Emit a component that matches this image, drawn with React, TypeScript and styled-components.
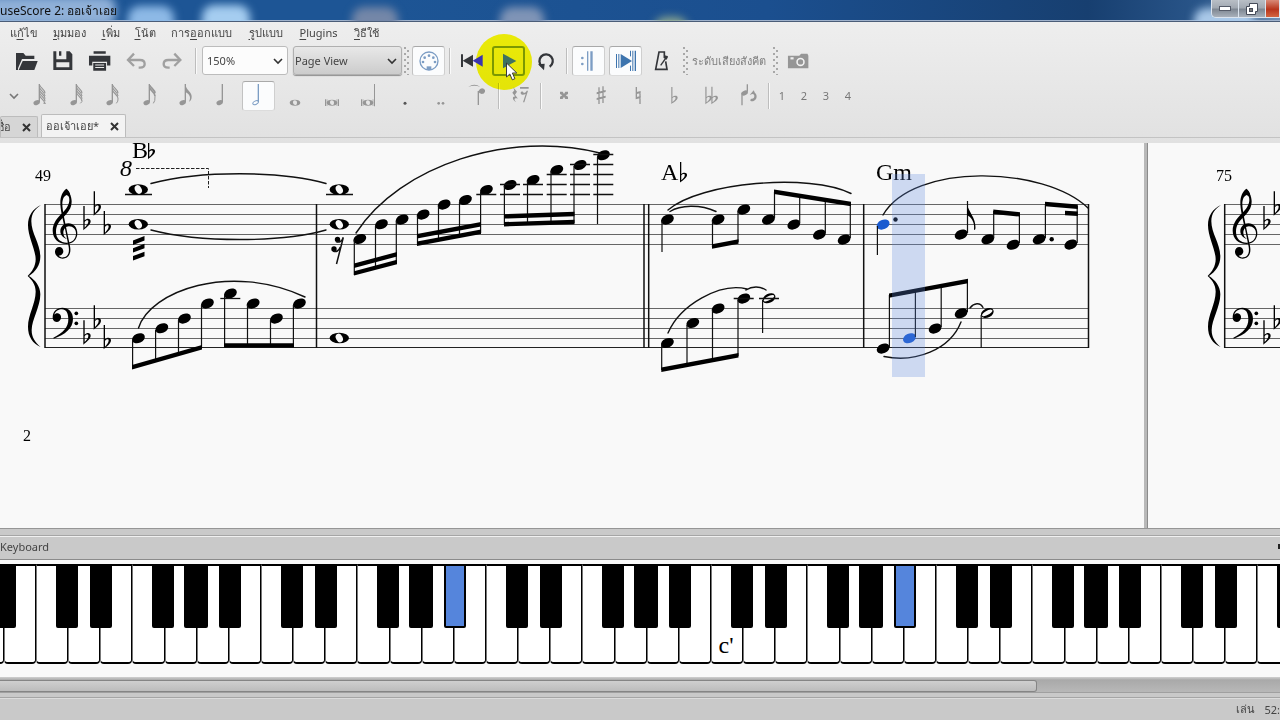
import React from "react";
import styled, { createGlobalStyle, css } from "styled-components";

const GlobalStyle = createGlobalStyle`
  * { box-sizing: border-box; }
  body { margin: 0; overflow: hidden; font-family: "Noto Sans", "Open Sans", sans-serif; font-size: 11px; color: #444; }
  button, select { font: inherit; color: inherit; }
`;

/* ---------- window frame ---------- */

const Window = styled.div`
  display: flex;
  flex-direction: column;
  height: 100vh;
  background: #c9c9c9;
`;

const TitleBar = styled.header`
  position: relative;
  flex: none;
  display: flex;
  justify-content: space-between;
  height: 22px;
  overflow: hidden;
  border-bottom: 1px solid #4b5d78;
  box-shadow: inset 0 -1px 0 #9fb2cc;
  background: linear-gradient(90deg, #1d5595 0%, #1d5595 30%, #1b4f8f 60%, #173f70 85%, #2a568a 94%, #6f8fb3 100%);
`;

const Glow = styled.span<{ $left: string; $width: number; $top: number; $color: string }>`
  position: absolute;
  left: ${(p) => p.$left};
  top: ${(p) => p.$top}px;
  width: ${(p) => p.$width}px;
  height: 30px;
  border-radius: 12px;
  filter: blur(4px);
  background: ${(p) => p.$color};
`;

const WindowTitle = styled.h1`
  position: relative;
  margin: 0;
  font-size: 12px;
  font-weight: 400;
  line-height: 22px;
  color: #111;
  white-space: nowrap;
`;

const WindowControls = styled.div`
  position: relative;
  display: flex;
  height: 18px;
  border: 1px solid #dbe4ee;
  border-top: 0;
  border-right: 0;
  border-radius: 0 0 0 5px;
  overflow: hidden;
`;

const WindowButton = styled.button<{ $danger?: boolean }>`
  display: flex;
  align-items: center;
  justify-content: center;
  width: ${(p) => (p.$danger ? 14 : 27)}px;
  padding: 0;
  border: 0;
  border-right: 1px solid #dbe4ee;
  background: ${(p) =>
    p.$danger
      ? "linear-gradient(#d88a78, #b8351c 55%, #d4643f)"
      : "linear-gradient(#b9bfc6, #a2a9b2 45%, #7f8893 55%, #a8b0ba)"};
`;

/* ---------- menus and tool bars ---------- */

const Chrome = styled.div`
  flex: none;
  display: flex;
  flex-direction: column;
  height: 121px;
  background: linear-gradient(#eeeeee, #e1e1e1);
`;

const MenuBar = styled.nav`
  display: flex;
  align-items: center;
  gap: 16px;
  height: 22px;
  padding-left: 10px;
`;

const MenuItem = styled.button<{ $width: number }>`
  display: flex;
  justify-content: center;
  width: ${(p) => p.$width}px;
  padding: 0;
  border: 0;
  background: none;
  line-height: 20px;
  white-space: nowrap;
  u {
    text-underline-offset: 2px;
  }
`;

const ToolBar = styled.div<{ $height: number; $start: number }>`
  display: flex;
  align-items: center;
  height: ${(p) => p.$height}px;
  padding-left: ${(p) => p.$start}px;
`;

const ToolButton = styled.button<{ $width?: number; $pressed?: boolean; $raised?: boolean }>`
  position: relative;
  z-index: ${(p) => (p.$raised ? 1 : "auto")};
  flex: none;
  display: flex;
  align-items: center;
  justify-content: center;
  width: ${(p) => p.$width ?? 33}px;
  height: 30px;
  padding: 0;
  border: 1px solid transparent;
  border-radius: 3px;
  background: none;
  ${(p) =>
    p.$pressed &&
    css`
      border-color: #a9a9a9 #cfcfcf #dcdcdc #c2c2c2;
      background: #fbfcfd;
    `}
`;

const PlayButton = styled(ToolButton)`
  border: 2px solid #7c9a3c;
  svg {
    position: relative;
    z-index: 1;
  }
`;

const ClickHalo = styled.span`
  position: absolute;
  left: -18px;
  top: -14px;
  width: 56px;
  height: 56px;
  border-radius: 50%;
  background: #fcfc08;
  mix-blend-mode: multiply;
  pointer-events: none;
`;

const Pointer = styled.span`
  position: absolute;
  z-index: 2;
  left: 11px;
  top: 14px;
  display: flex;
`;

const Gap = styled.span<{ $width: number }>`
  flex: none;
  width: ${(p) => p.$width}px;
`;

const Separator = styled.span<{ $gap?: number }>`
  flex: none;
  width: 2px;
  height: 26px;
  margin: 0 ${(p) => p.$gap ?? 5}px;
  border-left: 1px solid #bdbdbd;
  border-right: 1px solid #fafafa;
`;

const Handle = styled.span<{ $gap: number }>`
  flex: none;
  width: 6px;
  height: 28px;
  margin: 0 ${(p) => p.$gap}px;
  background-image: radial-gradient(circle at 1px 1px, #a8a8a8 1px, transparent 1px),
    radial-gradient(circle at 4px 4px, #a8a8a8 1px, transparent 1px);
  background-size: 6px 6px;
`;

const Combo = styled.label<{ $width: number; $flat?: boolean }>`
  position: relative;
  display: flex;
  align-items: center;
  width: ${(p) => p.$width}px;
  height: 29px;
  border: 1px solid ${(p) => (p.$flat ? "#bcbcbc" : "#b0b0b0")};
  border-radius: 3px;
  background: ${(p) => (p.$flat ? "#fcfcfc" : "linear-gradient(#e8e8e8, #cccccc)")};
  box-shadow: ${(p) => (p.$flat ? "none" : "0 1px 1px #8f8f8f")};
  svg {
    position: absolute;
    right: 4px;
    pointer-events: none;
  }
`;

const Select = styled.select<{ $inset: number }>`
  width: 100%;
  height: 100%;
  padding: 0 0 0 ${(p) => p.$inset}px;
  border: 0;
  appearance: none;
  background: none;
`;

const PitchLabel = styled.button`
  width: 74px;
  padding: 0;
  border: 0;
  background: none;
  color: #808080;
  white-space: nowrap;
`;

const Durations = styled.div`
  display: grid;
  grid-template-columns: repeat(13, 1fr);
  justify-items: center;
  width: 475px;
`;

const VoiceButton = styled.button`
  width: 22px;
  padding: 0;
  border: 0;
  background: none;
  color: #777;
`;

const Tabs = styled.div`
  display: flex;
  align-items: flex-end;
  gap: 3px;
  height: 23px;
  margin-top: 1px;
  border-bottom: 1px solid #c3c3c3;
`;

const Tab = styled.div<{ $active?: boolean; $width: number }>`
  display: flex;
  align-items: center;
  justify-content: flex-end;
  gap: 11px;
  width: ${(p) => p.$width}px;
  height: ${(p) => (p.$active ? 23 : 21)}px;
  padding-right: 6px;
  border: 1px solid #bcbcbc;
  border-bottom: 0;
  border-radius: 2px 2px 0 0;
  background: ${(p) => (p.$active ? "#f3f3f3" : "#d6d6d6")};
  overflow: hidden;
  white-space: nowrap;
`;

const TabLabel = styled.button`
  padding: 0;
  border: 0;
  background: none;
`;

const CloseButton = styled.button`
  display: flex;
  padding: 0;
  border: 0;
  background: none;
`;

/* ---------- score canvas ---------- */

const Canvas = styled.main`
  flex: 1;
  display: flex;
  min-height: 0;
  overflow: hidden;
  background: #f9f9f9;
  border-bottom: 1px solid #969696;
`;

const Sheet = styled.svg<{ $first?: boolean }>`
  flex: ${(p) => (p.$first ? "0 0 1144px" : "1 1 0")};
  min-width: 0;
  height: 385px;
  font-family: "Liberation Serif", serif;
`;

const PageEdge = styled.div`
  flex: none;
  width: 4px;
  border-right: 1px solid #8c8c8c;
  background: #b9b9b9;
`;

/* ---------- piano dock ---------- */

const DockTitle = styled.div`
  flex: none;
  display: flex;
  align-items: center;
  justify-content: space-between;
  height: 25px;
  margin-top: 6px;
  padding-bottom: 3px;
  border-top: 1px solid #a5a5a5;
  border-bottom: 1px solid #8b8b8b;
  box-shadow: inset 0 1px 0 #f0f0f0;
`;

const FloatMark = styled.button`
  width: 2px;
  height: 5px;
  padding: 0;
  border: 0;
  background: #222;
`;

const Piano = styled.div`
  flex: none;
  display: flex;
  height: 117px;
  padding: 4px 0 13px;
  overflow: hidden;
  background: #f9f9f9;
`;

const Octave = styled.div`
  position: relative;
  flex: none;
  display: grid;
  grid-template-columns: repeat(7, 1fr);
  width: 225px;
  &:first-child {
    margin-left: -189px;
  }
`;

const WhiteKey = styled.button`
  display: flex;
  align-items: flex-end;
  justify-content: center;
  padding: 0 2px 3px 0;
  border: 1px solid #000;
  border-top-width: 2px;
  border-bottom-width: 2px;
  border-left-color: #777;
  border-radius: 0 0 4px 4px;
  background: #fff;
  color: #000;
  font-family: "Liberation Serif", serif;
  font-size: 24px;
  line-height: 28px;
`;

const BlackKey = styled.button<{ $at: number; $wide?: boolean; $sounding?: boolean }>`
  position: absolute;
  top: 0;
  left: ${(p) => p.$at}px;
  width: ${(p) => (p.$wide ? 24 : 22)}px;
  height: 64px;
  padding: 0;
  border: 2px solid #000;
  border-radius: 0 0 2px 2px;
  background: ${(p) => (p.$sounding ? "#5585dc" : "#000")};
`;

const ScrollTrack = styled.div`
  flex: none;
  height: 16px;
  margin-bottom: 4px;
  padding-top: 3px;
  border-bottom: 1px solid #a0a0a0;
  background: linear-gradient(#d0d0d0, #a9a9a9 3px, #b8b8b8);
`;

const ScrollThumb = styled.div`
  width: 81%;
  height: 12px;
  border: 1px solid #858585;
  border-left: 0;
  border-radius: 0 3px 3px 0;
  background: linear-gradient(#cfcfcf, #bcbcbc);
`;

const StatusBar = styled.footer`
  flex: none;
  display: flex;
  align-items: center;
  justify-content: flex-end;
  gap: 9px;
  height: 23px;
  border-top: 1px solid #a5a5a5;
  box-shadow: inset 0 1px 0 #dcdcdc;
`;

/* ---------- tool bar icons ---------- */

interface IconProps {
  box: string;
  color?: string;
  children: React.ReactNode;
}

/* Icon artwork is drawn on a grid three times finer than the screen. */
const Icon = ({ box, color = "#34363a", children }: IconProps) => {
  const [, , w, h] = box.split(" ").map(Number);
  return (
    <svg width={Math.round(w / 3)} height={Math.round(h / 3)} viewBox={box} fill={color} stroke="none" aria-hidden="true">
      {children}
    </svg>
  );
};

const GREY = "#969696";
const BLUE = "#7c9dc4";

const Chevron = ({ color = "#333" }: { color?: string }) => (
  <svg width="10" height="8" viewBox="0 0 10 8" fill="none" stroke={color} strokeWidth="1.6" aria-hidden="true">
    <path d="M1 2l4 4 4-4" />
  </svg>
);

const Cross = () => (
  <svg width="9" height="9" viewBox="0 0 9 9" stroke="#333" strokeWidth="2" aria-hidden="true">
    <path d="M1 1l7 7M8 1l-7 7" />
  </svg>
);

const FlaggedNote = ({ flags, color = GREY, hollow }: { flags: number; color?: string; hollow?: boolean }) => (
  <Icon box="0 0 48 72" color={color}>
    <ellipse
      cx="17"
      cy="56"
      rx={hollow ? 9 : 10}
      ry={hollow ? 5 : 7}
      transform="rotate(-25 17 56)"
      fill={hollow ? "none" : color}
      stroke={hollow ? color : "none"}
      strokeWidth="3"
    />
    <path d="M23 0h4v54h-4z" />
    {flags === 1 && <path d="M25 2C28 18 45 24 44 38C44 46 41 50 36 53C42 42 40 32 25 24z" />}
    {flags > 1 &&
      Array.from({ length: flags }, (_, i) => (
        <path
          key={i}
          d={`M26 ${3 + i * 8}C27 ${11 + i * 8} 42 ${16 + i * 8} 42 ${28 + i * 8}`}
          fill="none"
          stroke={color}
          strokeWidth={flags === 2 ? 5 : 3.5}
        />
      ))}
    {flags > 1 && <path d={`M42 ${20 + flags * 8}Q43 52 37 58`} fill="none" stroke={color} strokeWidth="3" />}
  </Icon>
);

const OvalNote = ({ kind }: { kind: "whole" | "breve" | "longa" }) => (
  <Icon box="0 0 48 72" color={GREY}>
    <path
      fillRule="evenodd"
      d="M8 56c0-6 7-9 16-9s16 3 16 9-7 9-16 9-16-3-16-9zm10-1c0 5 3 8 7 8 3 0 5-3 5-7 0-5-3-7-7-7-3 0-5 2-5 6z"
    />
    {kind !== "whole" && <path d="M3 46h3v20H3zM8 46h2v20H8zM38 46h2v20h-2zM42 46h3v20h-3z" />}
    {kind === "longa" && <path d="M42 0h3v67h-3z" />}
  </Icon>
);

const FLAT = "M0 0H4V43C10 36 22 36 22 46C22 56 8 66 0 73ZM4 48V65C10 59 15 53 15 46C15 41 7 42 4 48Z";

const icons = {
  open: (
    <Icon box="45 150 72 60">
      <path d="M48 156h22l7 8h26v10H66L54 202v5h-6z" />
      <path d="M68 180h45l-10 27H56z" />
    </Icon>
  ),
  save: (
    <Icon box="158 150 66 63">
      <path fillRule="evenodd" d="M162 154h9v24h38v-24h2l8 9v47h-57zM171 187v15h39v-15z" />
      <path d="M179 154h7v13h-7zM201 154h8v26h-8z" />
    </Icon>
  ),
  print: (
    <Icon box="265 148 70 66">
      <path d="M282 151h37v8h-37zM268 165h65v30h-10v-12h-45v12h-10z" />
      <path fillRule="evenodd" d="M281 187h39v24h-39zM287 192v3h27v-3zM287 199v3h27v-3z" />
    </Icon>
  ),
  undo: (
    <Icon box="380 152 60 60" color="none">
      <g stroke="#a0a0a0" strokeWidth="7">
        <path d="M389 179h33q14 0 14 12 0 11-14 11h-4" />
        <path d="M404 160l-18 19 18 18" />
      </g>
    </Icon>
  ),
  redo: (
    <Icon box="488 152 60 60" color="none">
      <g stroke="#a0a0a0" strokeWidth="7">
        <path d="M540 179h-33q-14 0-14 12 0 11 14 11h4" />
        <path d="M525 160l18 19-18 18" />
      </g>
    </Icon>
  ),
  midi: (
    <Icon box="56 148 66 66" color={BLUE}>
      <circle cx="89" cy="181" r="27" fill="none" stroke={BLUE} strokeWidth="4" />
      <circle cx="71" cy="184" r="4" />
      <circle cx="76" cy="171" r="4" />
      <circle cx="89" cy="165" r="4" />
      <circle cx="102" cy="171" r="4" />
      <circle cx="107" cy="184" r="4" />
      <path d="M82 197h14v11H82z" />
    </Icon>
  ),
  rewind: (
    <Icon box="183 155 72 51">
      <path d="M186 162h6v38h-6zM222 163v36l-31-18z" />
      <path d="M251 163v36l-30-18z" fill="#3a35b0" />
    </Icon>
  ),
  play: (
    <Icon box="299 154 60 54" color="#3f7160">
      <path d="M311 159v44l40-22z" />
    </Icon>
  ),
  loop: (
    <Icon box="408 151 60 60">
      <path d="M426 197A20 20 0 1 1 449 198" fill="none" stroke="#34363a" strokeWidth="7" />
      <path d="M414 191l20-2-2 20z" />
    </Icon>
  ),
  repeat: (
    <Icon box="533 148 66 66" color={BLUE}>
      <circle cx="546" cy="172" r="4" />
      <circle cx="546" cy="190" r="4" />
      <path d="M560 152h4v58h-4zM570 152h7v58h-7z" />
    </Icon>
  ),
  pan: (
    <Icon box="645 148 66 66" color="#3d74ae">
      <path d="M648 160h3v42h-3zM655 160h3v42h-3zM662 160l34 21-34 21zM690 150h3v18l-3-2zM690 196l3-2v17h-3zM697 150h3v61h-3zM704 150h4v61h-4z" />
    </Icon>
  ),
  metronome: (
    <Icon box="763 148 48 66" color="none">
      <g stroke="#34363a" strokeWidth="5">
        <path d="M797 171V154H781L771 206H805L801 182" />
        <path d="M786 194L806 166" strokeWidth="4" />
      </g>
      <path d="M799 164l9 4-4 9-9-5z" fill="#34363a" />
    </Icon>
  ),
  camera: (
    <Icon box="1163 154 70 54" color={GREY}>
      <path d="M1166 164h36l6-6h20l3 6v40h-65z" />
      <path d="M1174 169h10v7h-10z" fill="#eee" />
      <circle cx="1206" cy="184" r="11" fill={GREY} stroke="#f2f2f2" strokeWidth="5" />
    </Icon>
  ),
  dot: (
    <Icon box="0 0 48 72" color="#555">
      <circle cx="24" cy="58" r="4.5" />
    </Icon>
  ),
  doubleDot: (
    <Icon box="0 0 48 72" color={GREY}>
      <circle cx="17" cy="58" r="4" />
      <circle cx="30" cy="58" r="4" />
    </Icon>
  ),
  tie: (
    <Icon box="202 250 66 75" color={GREY}>
      <path d="M206 262q18-14 36 0q-18-8-36 0z" />
      <path d="M234 274h4v42h-4z" />
      <path d="M236 275q6-12 16-8 6 3 4 9-2 7-10 7-8 0-10-8z" />
    </Icon>
  ),
  rest: (
    <Icon box="332 259 60 60" color={GREY}>
      <path d="M341 262l12 14-6 9 9 12c-10-3-14 2-6 10-12-6-12-18-2-16l-9-12 6-7z" />
      <path d="M362 262h26v5h-26zM364 280c0-6 8-6 9 0 5-1 8-4 9-7h4l-11 35h-4l8-25c-7 4-15 3-15-3z" />
    </Icon>
  ),
  doubleSharp: (
    <Icon box="474 258 36 60" color={GREY}>
      <path d="M480 275h8l4 7 4-7h8v7l-7 4 7 4v7h-8l-4-7-4 7h-8v-7l7-4-7-4z" />
    </Icon>
  ),
  sharp: (
    <Icon box="582 258 36 60" color={GREY}>
      <path d="M592 262h4v50h-4zM604 259h4v50h-4zM587 277l27-7v6l-27 7zM587 294l27-7v6l-27 7z" />
    </Icon>
  ),
  natural: (
    <Icon box="692 258 36 60" color={GREY}>
      <path d="M703 261h4v35h-4zM714 275h4v37h-4zM703 277l15-4v6l-15 4zM703 292l15-4v6l-15 4z" />
    </Icon>
  ),
  flat: (
    <Icon box="0 -2 28 84" color={GREY}>
      <path fillRule="evenodd" transform="translate(4 12) scale(.9 .72)" d={FLAT} />
    </Icon>
  ),
  doubleFlat: (
    <Icon box="0 -2 48 84" color={GREY}>
      <path fillRule="evenodd" transform="translate(4 12) scale(.9 .72)" d={FLAT} />
      <path fillRule="evenodd" transform="translate(22 12) scale(.9 .72)" d={FLAT} />
    </Icon>
  ),
  flip: (
    <Icon box="1014 252 60 72" color={GREY}>
      <path d="M1021 278h4v38h-4zM1037 253h4v22h-4z" />
      <ellipse cx="1031" cy="279" rx="10" ry="7" transform="rotate(-25 1031 279)" />
      <path d="M1046 285l12-14 4 8c8 6 6 20-4 24-6 2-11 0-10-4 4-4 12-2 12-10 0-5-4-8-8-6z" />
    </Icon>
  ),
};

/* ---------- notation ---------- */

const TREBLE = [204, 214, 224, 234, 244];
const BASS = [308, 318, 328, 338, 347];
const LIT = "#1a5bd0";

const Clefs = () => (
  <g transform="scale(.33333)">
    <path d="M199 146C207 153 215 168 215 184C215 205 204 218 190 232C178 244 168 256 168 275C168 296 182 308 200 308C217 308 228 298 228 280C228 268 219 259 207 259C197 259 190 268 190 278C190 287 194 292 201 297C189 294 181 285 181 274C181 260 192 250 205 250C221 250 232 263 232 280C232 301 216 312 199 312C176 312 158 296 158 272C158 250 172 234 184 222C196 210 206 198 208 182C209 173 205 165 200 165C197 165 194 168 191 173Z" />
    <path d="M199 146C207 153 212 160 210 170L200 165C193 165 187 178 187 192C187 208 193 235 198 260L210 318C215 342 204 356 188 356C175 356 165 346 165 335C165 326 171 321 178 321C185 321 190 327 190 334C190 342 183 347 176 347C180 351 186 353 191 352C204 350 209 338 206 320L194 262C188 236 181 208 181 188C181 168 189 153 199 146Z" />
    <path d="M160 593C190 578 205 562 205 538C205 518 198 508 186 508C176 508 166 513 163 524C167 520 171 519 174 520C181 522 184 528 183 534C182 541 177 546 170 546C161 545 157 538 158 530C159 514 170 503 187 503C206 503 219 516 219 537C219 565 195 584 161 596Z" />
    <circle cx="229" cy="520" r="5.5" />
    <circle cx="229" cy="550" r="5.5" />
    <path d="M123 195C98 206 84 228 84 255C84 290 107 330 107 358C107 378 96 396 83 408C96 420 107 434 107 455C107 490 84 525 84 560C84 590 98 610 122 621C104 606 95 592 95 570C95 540 121 500 121 463C121 438 105 420 87 408C106 395 121 375 121 350C121 312 94 280 94 244C94 220 106 206 123 195Z" />
    {[
      [250, 198],
      [281, 154],
      [311, 213],
      [250, 541],
      [281, 496],
      [311, 555],
    ].map(([x, y]) => (
      <path key={`${x}-${y}`} d={FLAT} fillRule="evenodd" transform={`translate(${x} ${y})`} />
    ))}
  </g>
);

const Staves = ({ from, to }: { from: number; to: number }) => (
  <>
    {[...TREBLE, ...BASS].map((y) => (
      <rect key={y} x={from} y={y} width={to - from} height="1" fill={y === 347 ? "#222" : "#666"} />
    ))}
  </>
);

const Heads = ({ at, fill }: { at: number[][]; fill?: string }) => (
  <>
    {at.map(([x, y]) => (
      <ellipse key={`${x}-${y}`} cx={x} cy={y + 0.3} rx="6.7" ry="4.7" fill={fill} transform={`rotate(-24 ${x} ${y})`} />
    ))}
  </>
);

const Half = ({ x, y }: { x: number; y: number }) => (
  <g transform={`translate(${x} ${y}) rotate(-27)`}>
    <path fillRule="evenodd" d="M-6.8 0a6.8 4.5 0 1 0 13.6 0a6.8 4.5 0 1 0-13.6 0zM-5.6 .4a5.6 2 0 0 1 11.2-1a5.6 2 0 0 1-11.2 1z" />
  </g>
);

const Whole = ({ x, y }: { x: number; y: number }) => (
  <g transform={`translate(${x} ${y})`}>
    <ellipse rx="9.7" ry="5.3" />
    <ellipse rx="3.3" ry="4.5" fill="#f9f9f9" transform="rotate(-28)" />
  </g>
);

const Ledgers = ({ at }: { at: number[][] }) => (
  <path d={at.map(([x, y]) => `M${x - 10} ${y + 0.5}h20`).join("")} stroke="#111" strokeWidth="1.3" />
);

/* Each stem is x, start y, end y. */
const Stems = ({ at }: { at: number[][] }) => (
  <path d={at.map(([x, a, b]) => `M${x} ${a}V${b}`).join("")} stroke="#111" strokeWidth="1.2" />
);

/* Each beam is x1, y1, x2, y2, measured on its centre line. */
const Beams = ({ at }: { at: number[][] }) => (
  <>
    {at.map(([x1, y1, x2, y2]) => (
      <polygon key={`${x1}-${y1}`} points={`${x1},${y1 - 2.2} ${x2},${y2 - 2.2} ${x2},${y2 + 2.2} ${x1},${y1 + 2.2}`} />
    ))}
  </>
);

const Slurs = ({ at }: { at: string[] }) => (
  <path d={at.join("")} fill="none" stroke="#111" strokeWidth="1.4" strokeLinecap="round" />
);

const FirstSheet = () => (
  <Sheet $first role="img" aria-label="Score page 2">
    <g transform="translate(0 -143)" fill="#000">
      <Staves from={45} to={1089} />
      <path d="M45 204V348M316.5 204V348M644 204V348M648.7 204V348M863.7 204V348M1088.5 204V348" stroke="#111" strokeWidth="1.5" />
      <g transform="translate(0 140)">
        <Clefs />
      </g>

      <g fontSize="16">
        <text x="35" y="181">49</text>
        <text x="23" y="441">2</text>
      </g>
      <g fontSize="24">
        <text x="132" y="158">B</text>
        <text x="661" y="180">A</text>
        <text x="876" y="180">Gm</text>
        <text x="120" y="176" fontStyle="italic">8</text>
      </g>
      <path d={FLAT} fillRule="evenodd" transform="translate(148 138) scale(.32 .29)" />
      <path d={FLAT} fillRule="evenodd" transform="translate(680 162) scale(.32 .28)" />
      <path d="M136 168.5H208.5V188" fill="none" stroke="#222" strokeDasharray="3.5 1.5" />

      {/* Measure 49 */}
      <path d="M125 194.5h27M326 194.5h27" stroke="#111" strokeWidth="1.3" />
      <Whole x={138.3} y={189.5} />
      <Whole x={138.3} y={224.3} />
      <Beams at={[[133, 242.7, 144.5, 238.3], [133, 250.4, 144.5, 246], [133, 258.3, 144.5, 254]]} />
      <Heads
        at={[[138.3, 338], [161.7, 328], [184.3, 318.3], [207.3, 303.3], [230.3, 293.3], [253, 303.3], [276.3, 318.3], [299.3, 303.3]]}
      />
      <Ledgers at={[[230.3, 298]]} />
      <Stems
        at={[[132.6, 340, 368], [155.6, 330, 361], [178.5, 320, 354], [201.5, 305, 348], [224.6, 295, 345], [247.5, 305, 345], [270.5, 320, 345], [293.4, 305, 345]]}
      />
      <Beams at={[[132, 367.3, 202, 347.3], [224, 345.4, 294, 345.4]]} />
      <Slurs
        at={["M151 183.5C200 170.5 280 170.5 326 183.5", "M151 230C200 242.7 280 242.7 326 230", "M138.5 328C150 291 230 262 305 297"]}
      />

      {/* Measure 50 */}
      <Whole x={339.3} y={189.5} />
      <Whole x={339.3} y={224.3} />
      <Whole x={339.3} y={338} />
      <circle cx="337.5" cy="239.5" r="2.7" />
      <circle cx="334" cy="249" r="2.7" />
      <path d="M336 241.500q5 2 7.300-4M333 251q5 2 7.300-4M343.300 237.500L336.500 264" fill="none" stroke="#111" strokeWidth="1.5" />
      <Heads
        at={[[359.7, 238.7], [381.3, 224], [402, 219.3], [423, 214.3], [444, 204.3], [465.3, 199.7], [486.3, 189.7], [510, 184.7], [533, 179.7], [556.7, 169.7], [580, 164.7], [603.3, 155]]}
      />
      <Ledgers
        at={[[486.3, 194], [510, 194], [533, 194], [556.7, 194], [580, 194], [603.3, 194], [510, 184], [533, 184], [556.7, 184], [580, 184], [603.3, 184], [556.7, 174], [580, 174], [603.3, 174], [580, 164], [603.3, 164], [603.3, 154]]}
      />
      <Stems
        at={[[354.3, 240, 275], [375.5, 226, 269], [396.3, 221, 263], [417.5, 216, 245], [438.5, 206, 241], [459.5, 202, 237], [480.6, 192, 233], [504.4, 186, 225], [527.5, 181, 224], [551, 171, 223], [574, 166, 223], [597.5, 157, 224]]}
      />
      <Beams
        at={[[354, 273.4, 397, 262], [354, 265.8, 397, 254.2], [417, 243.7, 481, 231.7], [417, 236.3, 481, 224.3], [504, 224.2, 574.5, 222], [504, 216.4, 574.5, 214]]}
      />
      <Slurs at={["M356 233C400 165 510 130 600 153"]} />

      {/* Measure 51 */}
      <Heads
        at={[[667.3, 219.3], [718, 219.3], [743.7, 209.3], [768.3, 219.3], [793.7, 224.3], [819.3, 234.3], [844, 239.3], [667.3, 342.7], [692.7, 322.7], [718, 308.3], [743.7, 298.3]]}
      />
      <Half x={769} y={298.3} />
      <Ledgers at={[[743.7, 298], [769, 298]]} />
      <Stems
        at={[[662, 221, 252], [712.5, 221, 247], [738, 211, 242], [774.5, 218, 192], [799.7, 223, 196], [825.3, 233, 200], [850.3, 238, 204], [661.7, 344, 370], [687, 325, 365], [712.5, 310, 360], [738, 300, 356], [762.6, 300, 333]]}
      />
      <Beams at={[[712, 246.5, 738.5, 241.5], [774, 191.7, 851, 204], [661.3, 369.7, 738.5, 355.3]]} />
      <Slurs
        at={["M668 210C700 182 810 173 851 193.500", "M670 211.500C680 205 700 204 716 211.500", "M668 333C680 305 720 282 747 289", "M746 290C752 286 760 286 766 290"]}
      />

      {/* Measure 52 */}
      <Heads at={[[883, 224.3], [909.3, 338]]} fill={LIT} />
      <Heads
        at={[[961, 234.3], [987.7, 239], [1013, 244.5], [1039, 239], [1070.7, 244.3], [883, 348.3], [935, 328.3], [961, 313]]}
      />
      <Half x={987.3} y={313} />
      <circle cx="895.5" cy="219.5" r="2.2" />
      <circle cx="1051.7" cy="239.3" r="2.2" />
      <Stems
        at={[[877.4, 226, 255], [967.5, 233, 201], [993.7, 238, 211], [1019.4, 243, 214], [1045.4, 238, 204], [1077.2, 243, 206], [889.4, 347, 295], [915.4, 337, 291], [941.2, 327, 286], [967.4, 312, 281], [981.2, 315, 348]]}
      />
      <path d="M967 204C968 211 976 218 975.500 228C975.300 230 974.500 230.500 974 229.500C975 222 971 217 967 215Z" />
      <Beams at={[[993.3, 211.7, 1020, 214.4], [1045, 204, 1077.8, 206.7], [1065, 213, 1077.8, 213.8], [889, 295.6, 968, 281]]} />
      <Slurs
        at={["M883 215C914 162 1044 166 1088 208", "M884 356.500C915 363 950 350 961 322", "M970 308C974 303 980 302 983 307.500"]}
      />
      <rect x="892" y="174" width="33" height="203" fill="#5f87e0" fillOpacity=".28" />
    </g>
  </Sheet>
);

const SecondSheet = () => (
  <Sheet role="img" aria-label="Score page 3">
    <g transform="translate(-1148 -143)" fill="#000">
      <Staves from={1225} to={2200} />
      <path d="M1224.7 204V348" stroke="#111" strokeWidth="1.5" />
      <text x="1216" y="181" fontSize="16">75</text>
      <g transform="translate(1180 140)">
        <Clefs />
      </g>
    </g>
  </Sheet>
);

/* ---------- data ---------- */

/* Text before the access key, the access key, the rest, and the entry's width. */
const menus: [string, string, string, number][] = [
  ["แ", "ก้", "ไข", 27],
  ["", "มุ", "มมอง", 33],
  ["", "เ", "พิ่ม", 17],
  ["", "โ", "น้ต", 20],
  ["การ", "อ", "อกแบบ", 61],
  ["", "รู", "ปแบบ", 35],
  ["", "P", "lugins", 39],
  ["", "วิ", "ธีใช้", 25],
];

const durations: [string, React.ReactNode][] = [
  ["128th", <FlaggedNote flags={5} />],
  ["64th", <FlaggedNote flags={4} />],
  ["32nd", <FlaggedNote flags={3} />],
  ["16th", <FlaggedNote flags={2} />],
  ["8th", <FlaggedNote flags={1} />],
  ["Quarter", <FlaggedNote flags={0} />],
  ["Half", <FlaggedNote flags={0} color={BLUE} hollow />],
  ["Whole", <OvalNote kind="whole" />],
  ["Breve", <OvalNote kind="breve" />],
  ["Longa", <OvalNote kind="longa" />],
  ["Dot", icons.dot],
  ["Double dot", icons.doubleDot],
  ["Tie", icons.tie],
];

const accidentals: [string, React.ReactNode][] = [
  ["Double sharp", icons.doubleSharp],
  ["Sharp", icons.sharp],
  ["Natural", icons.natural],
  ["Flat", icons.flat],
  ["Double flat", icons.doubleFlat],
  ["Flip direction", icons.flip],
];

const blackKeys = [20, 54, 116, 148, 183];
const octaves = Array.from({ length: 10 }, (_, i) => i);

export default function App() {
  return (
    <Window>
      <GlobalStyle />
      <TitleBar>
        <Glow $left="-20px" $width={136} $top={-4} $color="#8fb0d8" />
        <Glow $left="128px" $width={46} $top={6} $color="#8db9e6" />
        <Glow $left="202px" $width={48} $top={5} $color="#a5cdf0" />
        <Glow $left="352px" $width={46} $top={7} $color="#7487a8" />
        <Glow $left="500px" $width={44} $top={7} $color="#7f94b6" />
        <Glow $left="654px" $width={34} $top={17} $color="#8aa58f" />
        <Glow $left="calc(100% - 86px)" $width={60} $top={8} $color="#a9c8e8" />
        <WindowTitle>useScore 2: ออเจ้าเอย</WindowTitle>
        <WindowControls>
          <WindowButton aria-label="Minimize">
            <svg width="12" height="5" aria-hidden="true">
              <rect x=".5" y=".5" width="11" height="4" fill="#fff" stroke="#555b68" />
            </svg>
          </WindowButton>
          <WindowButton aria-label="Restore">
            <svg width="12" height="12" aria-hidden="true">
              <path d="M3.500 .5h8v8h-2v3h-9v-8h3z" fill="#fff" stroke="#454b58" />
              <rect x="3.5" y="5.5" width="3" height="3" fill="#777" stroke="#454b58" />
            </svg>
          </WindowButton>
          <WindowButton $danger aria-label="Close" />
        </WindowControls>
      </TitleBar>

      <Chrome>
        <MenuBar>
          {menus.map(([before, key, after, width]) => (
            <MenuItem key={key + after} $width={width}>
              <span>
                {before}
                <u>{key}</u>
                {after}
              </span>
            </MenuItem>
          ))}
        </MenuBar>

        <ToolBar $height={33} $start={9}>
          <ToolButton $width={36} aria-label="Open">{icons.open}</ToolButton>
          <ToolButton $width={36} aria-label="Save">{icons.save}</ToolButton>
          <ToolButton $width={36} aria-label="Print">{icons.print}</ToolButton>
          <ToolButton $width={37} aria-label="Undo">{icons.undo}</ToolButton>
          <ToolButton $width={36} aria-label="Redo">{icons.redo}</ToolButton>
          <Separator />
          <Combo $width={86} $flat>
            <Select $inset={4} aria-label="Zoom">
              <option>150%</option>
            </Select>
            <Chevron />
          </Combo>
          <Gap $width={5} />
          <Combo $width={109}>
            <Select $inset={1} aria-label="View mode">
              <option>Page View</option>
            </Select>
            <Chevron />
          </Combo>
          <Handle $gap={2} />
          <ToolButton $pressed aria-label="MIDI input">{icons.midi}</ToolButton>
          <Separator $gap={4} />
          <ToolButton $raised aria-label="Rewind">{icons.rewind}</ToolButton>
          <Gap $width={4} />
          <PlayButton aria-label="Play">
            <ClickHalo />
            {icons.play}
            <Pointer>
              <svg width="14" height="20" viewBox="0 0 14 20" aria-hidden="true">
                <path d="M1.500 1v14l3.300-3 2.500 5.800 2.600-1.100-2.500-5.700h4.400z" fill="#fff" stroke="#3a3a3a" />
              </svg>
            </Pointer>
          </PlayButton>
          <Gap $width={4} />
          <ToolButton aria-label="Loop">{icons.loop}</ToolButton>
          <Separator $gap={4} />
          <ToolButton $pressed aria-label="Play repeats">{icons.repeat}</ToolButton>
          <Gap $width={4} />
          <ToolButton $pressed aria-label="Pan score">{icons.pan}</ToolButton>
          <ToolButton $width={38} aria-label="Metronome">{icons.metronome}</ToolButton>
          <Handle $gap={3} />
          <PitchLabel>ระดับเสียงสังคีต</PitchLabel>
          <Handle $gap={7} />
          <ToolButton $width={24} aria-label="Image capture">{icons.camera}</ToolButton>
        </ToolBar>

        <ToolBar $height={37} $start={6}>
          <ToolButton $width={15} aria-label="Note input options">
            <Chevron color="#777" />
          </ToolButton>
          <Durations>
            {durations.map(([label, icon]) => (
              <ToolButton key={label} $pressed={label === "Half"} aria-label={label}>
                {icon}
              </ToolButton>
            ))}
          </Durations>
          <Separator $gap={2} />
          <ToolButton $width={35} aria-label="Rest">{icons.rest}</ToolButton>
          <Separator $gap={3} />
          {accidentals.map(([label, icon]) => (
            <ToolButton key={label} $width={37} aria-label={label}>
              {icon}
            </ToolButton>
          ))}
          <Separator $gap={1} />
          {["1", "2", "3", "4"].map((voice) => (
            <VoiceButton key={voice}>{voice}</VoiceButton>
          ))}
        </ToolBar>

        <Tabs>
          <Tab $width={38}>
            <TabLabel>ชื่อ</TabLabel>
            <CloseButton aria-label="Close tab"><Cross /></CloseButton>
          </Tab>
          <Tab $active $width={85}>
            <TabLabel>ออเจ้าเอย*</TabLabel>
            <CloseButton aria-label="Close tab"><Cross /></CloseButton>
          </Tab>
        </Tabs>
      </Chrome>

      <Canvas>
        <FirstSheet />
        <PageEdge />
        <SecondSheet />
      </Canvas>

      <DockTitle>
        <span>Keyboard</span>
        <FloatMark aria-label="Float panel" />
      </DockTitle>
      <Piano>
        {octaves.map((octave) => (
          <Octave key={octave}>
            {["C", "D", "E", "F", "G", "A", "B"].map((name) => (
              <WhiteKey key={name} aria-label={`${name}${octave}`}>
                {octave === 4 && name === "C" ? "c'" : ""}
              </WhiteKey>
            ))}
            {blackKeys.map((at, i) => (
              <BlackKey
                key={at}
                $at={at}
                $wide={i === 3}
                $sounding={i === 4 && (octave === 2 || octave === 4)}
                aria-label={`Black key ${i + 1}, octave ${octave}`}
              />
            ))}
          </Octave>
        ))}
      </Piano>
      <ScrollTrack>
        <ScrollThumb />
      </ScrollTrack>
      <StatusBar>
        <span>เล่น</span>
        <span>52:</span>
      </StatusBar>
    </Window>
  );
}
